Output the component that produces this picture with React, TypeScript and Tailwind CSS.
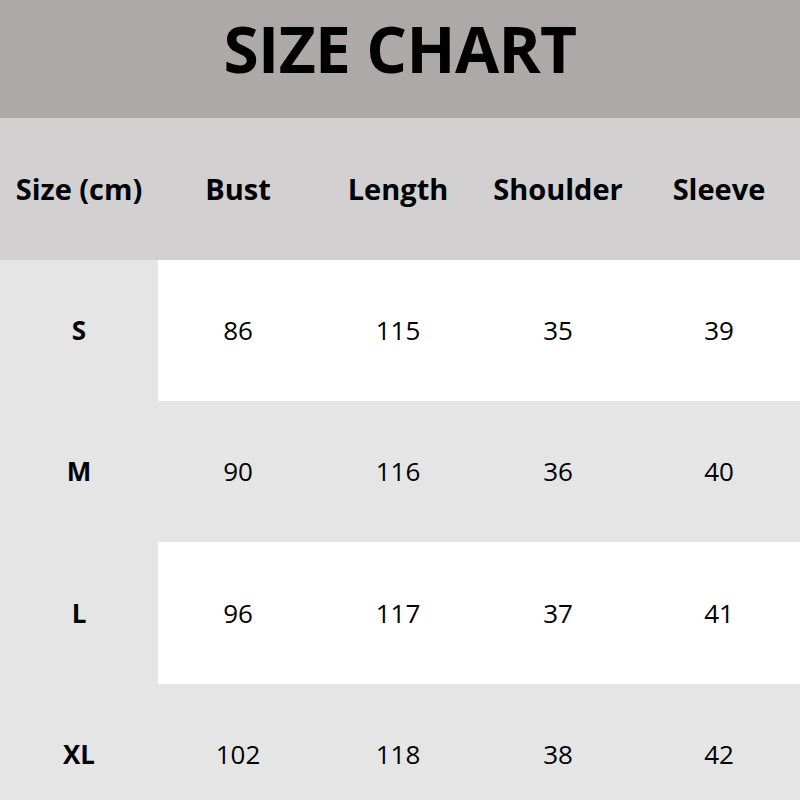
import React from "react";

const rows = [
  { s: "S", v: ["86", "115", "35", "39"], white: true },
  { s: "M", v: ["90", "116", "36", "40"], white: false },
  { s: "L", v: ["96", "117", "37", "41"], white: true },
  { s: "XL", v: ["102", "118", "38", "42"], white: false },
];

export default function App() {
  return (
    <div
      className="w-[800px] h-[800px] bg-[#e5e5e5] flex flex-col overflow-hidden text-black"
      style={{ fontFamily: '"Open Sans", "Noto Sans", sans-serif' }}
    >
      <div className="h-[118px] shrink-0 bg-[#ada9a8] flex items-center justify-center pb-[21px]">
        <span className="text-[64px] font-bold leading-none tracking-[-0.6px]">SIZE CHART</span>
      </div>
      <div className="h-[142px] shrink-0 bg-[#d2d0d1] grid grid-cols-[158px_160px_160px_160px_162px] items-center text-[29px] font-bold">
        {["Size (cm)", "Bust", "Length", "Shoulder", "Sleeve"].map((h) => (
          <div key={h} className="text-center">{h}</div>
        ))}
      </div>
      {rows.map((r, idx) => (
        <div key={r.s} className={`${idx === 2 ? "h-[142px]" : "h-[141px]"} grid grid-cols-[158px_642px] shrink-0`}>
          <div className="flex items-center justify-center text-[26px] font-bold">{r.s}</div>
          <div className={`grid grid-cols-[160px_160px_160px_162px] items-center text-[26px] ${r.white ? "bg-white" : ""}`}>
            {r.v.map((x, i) => (
              <div key={i} className="text-center">{x}</div>
            ))}
          </div>
        </div>
      ))}
    </div>
  );
}
